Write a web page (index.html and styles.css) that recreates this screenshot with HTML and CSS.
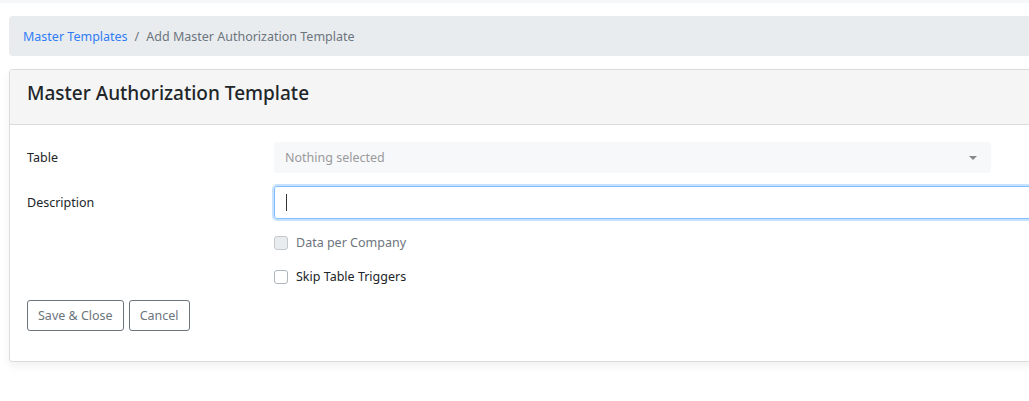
FILE: index.html
```html
<!DOCTYPE html>
<html>
<head>
<meta charset="utf-8">
<link rel="stylesheet" href="styles.css">
</head>
<body>
<div class="topbar"></div>
<div class="page">
  <nav class="breadcrumb">
    <a class="crumb-link" href="#">Master Templates</a>
    <span class="crumb-sep">/</span>
    <span class="crumb-active">Add Master Authorization Template</span>
  </nav>
  <div class="card">
    <div class="card-header">
      <h1 class="card-title">Master Authorization Template</h1>
    </div>
    <div class="card-body">
      <div class="form-row">
        <label class="form-label">Table</label>
        <div class="select">
          <span class="select-text">Nothing selected</span>
          <span class="caret"></span>
        </div>
      </div>
      <div class="form-row">
        <label class="form-label">Description</label>
        <div class="input"><span class="cursor"></span></div>
      </div>
      <div class="check-row">
        <span class="checkbox disabled"></span>
        <span class="check-label muted">Data per Company</span>
      </div>
      <div class="check-row">
        <span class="checkbox"></span>
        <span class="check-label">Skip Table Triggers</span>
      </div>
      <div class="actions">
        <button class="btn">Save &amp; Close</button>
        <button class="btn">Cancel</button>
      </div>
    </div>
  </div>
</div>
</body>
</html>
```

FILE: styles.css
```css
html, body {
  margin: 0;
  padding: 0;
  background: #fff;
  overflow: hidden;
}
body {
  font-family: "Noto Sans", "Open Sans", "Liberation Sans", sans-serif;
  font-size: 12.5px;
  color: #212529;
  width: 1029px;
  height: 401px;
}
.topbar {
  height: 3px;
  background: #f6f7f9;
}
.page {
  padding: 13px 0 0 9px;
  width: 1100px;
}
.breadcrumb {
  display: flex;
  align-items: center;
  gap: 7px;
  height: 40px;
  padding: 0 14px;
  background: #e9ecef;
  border-radius: 4px;
}
.crumb-link {
  color: #2f7cf6;
  text-decoration: none;
}
.crumb-sep, .crumb-active {
  color: #6c757d;
}
.card {
  margin-top: 13px;
  border: 1px solid #dcdcdc;
  border-radius: 3px;
  box-shadow: 0 4px 10px rgba(0, 0, 0, 0.06);
  background: #fff;
}
.card-header {
  height: 55px;
  box-sizing: border-box;
  padding: 11px 17px 0;
  background: #f5f5f5;
  border-bottom: 1px solid #dcdcdc;
}
.card-title {
  margin: 0;
  font-size: 19px;
  line-height: 24px;
  font-weight: 500;
  color: #212529;
}
.card-body {
  padding: 17px 17px 30px;
  display: flex;
  flex-direction: column;
}
.form-row {
  display: flex;
  align-items: center;
  margin-bottom: 13px;
}
.form-label {
  width: 247px;
  flex: none;
}
.select {
  width: 717px;
  height: 31px;
  box-sizing: border-box;
  background: #f7f8fa;
  border-radius: 3px;
  display: flex;
  align-items: center;
  justify-content: space-between;
  padding: 0 11px;
}
.select-text {
  color: #9a9a9a;
}
.caret {
  width: 0;
  height: 0;
  border-left: 4px solid transparent;
  border-right: 4px solid transparent;
  border-top: 4px solid #888;
  margin-right: 3px;
}
.input {
  flex: 1;
  height: 33px;
  box-sizing: border-box;
  border: 1px solid #80bdff;
  border-radius: 3px;
  box-shadow: 0 0 0 2px rgba(0, 123, 255, 0.22);
  display: flex;
  align-items: center;
  padding-left: 11px;
}
.cursor {
  width: 1px;
  height: 17px;
  background: #333;
}
.check-row {
  display: flex;
  align-items: center;
  gap: 8px;
  margin-left: 247px;
  height: 21px;
  margin-bottom: 13px;
}
.checkbox {
  width: 12px;
  height: 12px;
  border: 1px solid #adb5bd;
  border-radius: 3px;
  background: #fff;
  flex: none;
}
.checkbox.disabled {
  background: #e9ecef;
  border-color: #c4c9ce;
}
.muted {
  color: #6c757d;
}
.actions {
  display: flex;
  gap: 5px;
}
.btn {
  font-family: inherit;
  font-size: 12.5px;
  color: #6c757d;
  background: #fff;
  border: 1px solid #6c757d;
  border-radius: 3px;
  height: 31px;
  padding: 0 10px;
}
```
